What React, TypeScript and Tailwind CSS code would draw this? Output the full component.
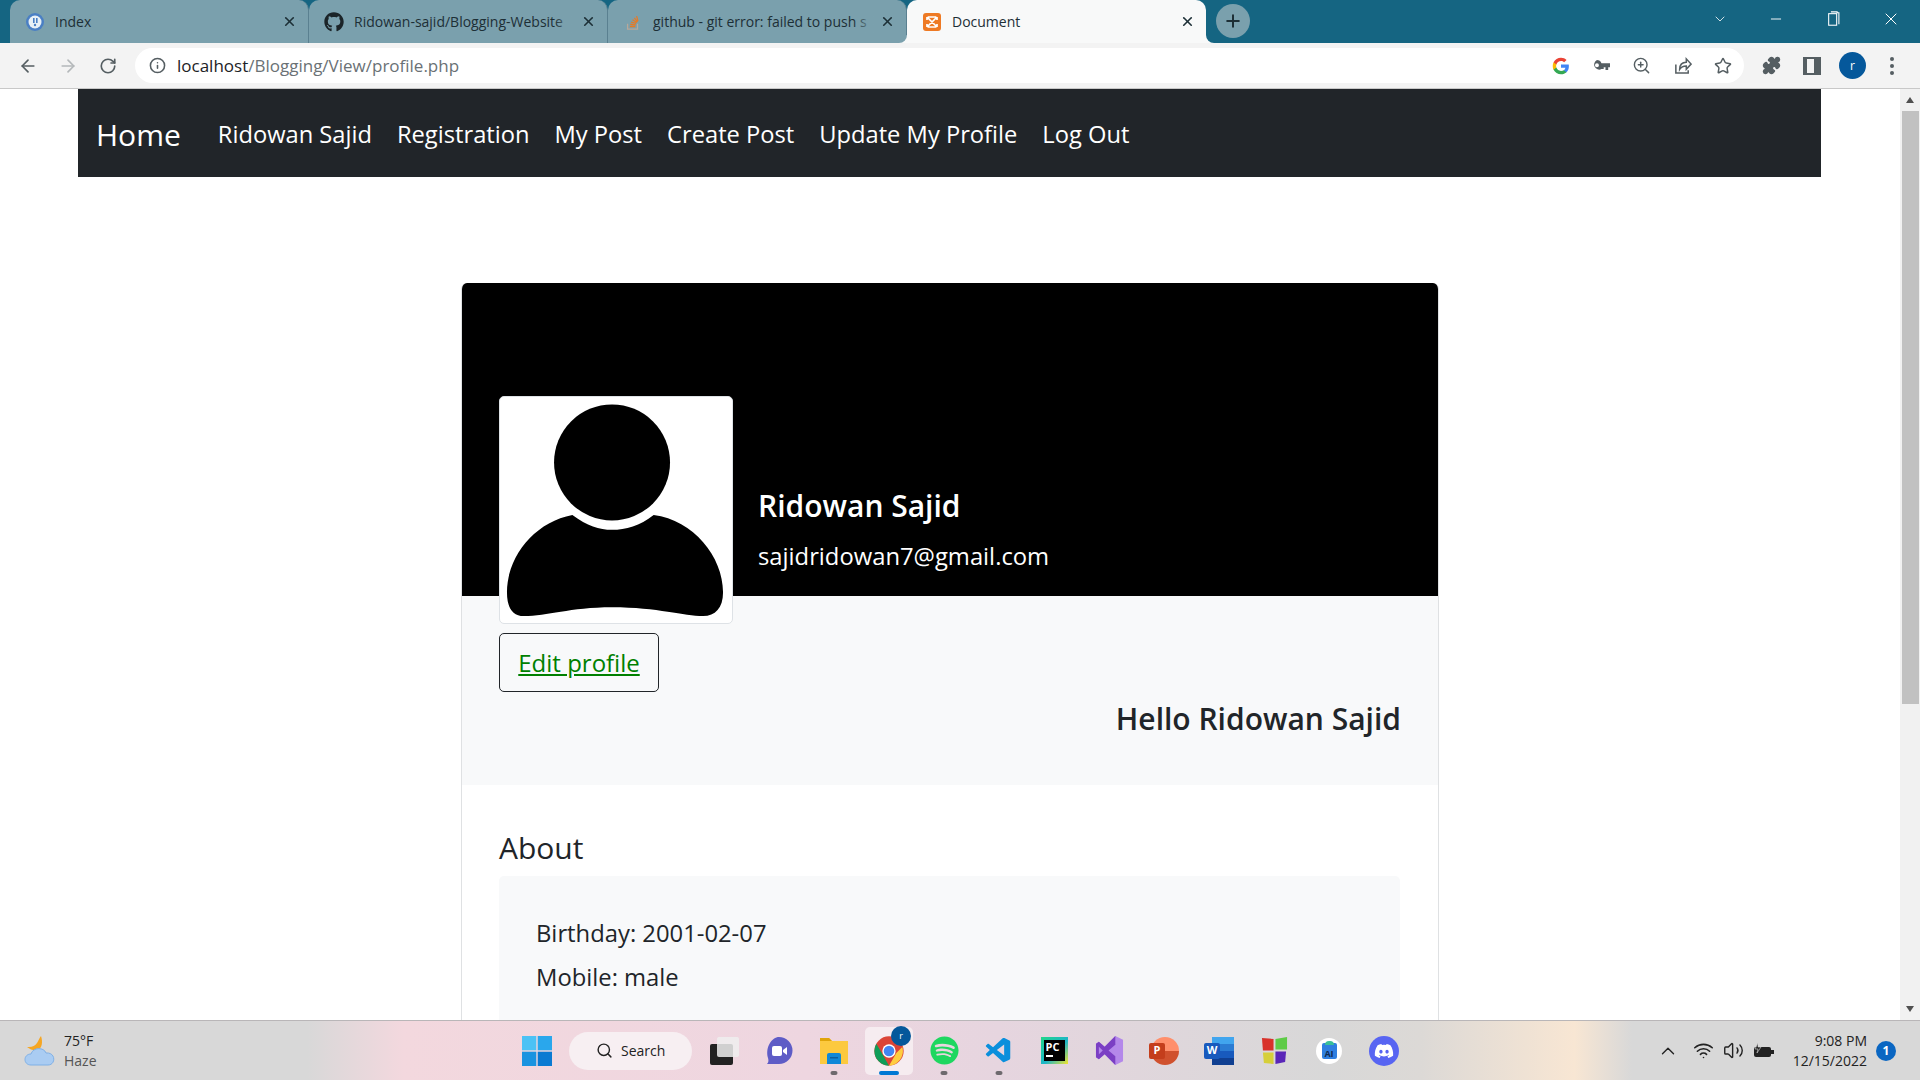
import React from "react";
import { ArrowLeft, ArrowRight, RotateCw, Info, ZoomIn, Star, Puzzle, X, Plus, ChevronDown, Minus, Search, ChevronUp, Wifi, Volume2 } from "lucide-react";
import { FaGithub, FaDiscord, FaSpotify } from "react-icons/fa";
import { VscVscode } from "react-icons/vsc";

const font = "font-['Open_Sans','Noto_Sans',sans-serif]";

function Tab({ icon, title, active, fade }: { icon: React.ReactNode; title: string; active?: boolean; fade?: boolean }) {
  return (
    <div className={`relative flex h-[43px] w-[299px] shrink-0 items-center pl-[15px] pr-[11px] rounded-t-[10px] ${active ? "z-10 bg-[#f8f9f9]" : "bg-[#7aa0ad] border-r border-[#5a8090]"}`}>
      {active && (
        <>
          <span className="absolute -left-[8px] bottom-0 h-[8px] w-[8px] bg-[#f8f9f9]"><span className="block h-full w-full rounded-br-[8px] bg-[#7aa0ad]" /></span>
          <span className="absolute -right-[8px] bottom-0 h-[8px] w-[8px] bg-[#f8f9f9]"><span className="block h-full w-full rounded-bl-[8px] bg-[#156582]" /></span>
        </>
      )}
      <span className="flex h-[20px] w-[20px] shrink-0 items-center justify-center">{icon}</span>
      <span className="ml-[10px] flex-1 overflow-hidden whitespace-nowrap pb-[1px] text-[14px] text-[#1d2f36]">{title}</span>
      {fade && <span className="absolute right-[31px] top-[10px] h-[24px] w-[22px] bg-gradient-to-r from-transparent to-[#7aa0ad]" />}
      <X className="ml-[8px] h-[15px] w-[15px] shrink-0 text-[#1d2f36]" strokeWidth={2.6} />
    </div>
  );
}

function TabBar() {
  return (
    <div className="flex h-[43px] shrink-0 items-start bg-[#156582] pl-[10px]">
      <Tab title="Index" icon={
        <svg viewBox="0 0 20 20" className="h-[20px] w-[20px]"><circle cx="10" cy="10" r="9" fill="#4a7fc4" /><circle cx="10" cy="10" r="6.5" fill="#e8f0f6" /><rect x="8" y="6" width="1.6" height="5" fill="#4a7fc4" /><rect x="11" y="6" width="1.6" height="5" fill="#4a7fc4" /><circle cx="10" cy="13" r="1.2" fill="#4a7fc4" /></svg>
      } />
      <Tab title="Ridowan-sajid/Blogging-Website" fade icon={<FaGithub className="h-[20px] w-[20px] text-[#1b2428]" />} />
      <Tab title="github - git error: failed to push s" fade icon={
        <svg viewBox="0 0 20 20" className="h-[18px] w-[18px]"><path d="M4 12v6h11v-6" fill="none" stroke="#b8a89a" strokeWidth="1.4" /><path d="M6.5 15h6M7 12.5l6 .6M7.7 10l5.8 1.6M9.4 7.5l5 3M11.5 5.3l3.6 4.6M14 3.5l1.5 5.5" stroke="#e87a24" strokeWidth="1.4" fill="none" /></svg>
      } />
      <Tab title="Document" active icon={
        <svg viewBox="0 0 20 20" className="h-[20px] w-[20px]"><rect x="1" y="1" width="18" height="18" rx="3" fill="#ee7a24" /><path d="M6 5h8M6 15h8M5 5l10 10M15 5L5 15M5 5v3M15 5v3M5 12v3M15 12v3" stroke="#fff" strokeWidth="1.7" fill="none" /></svg>
      } />
      <div className="ml-[10px] mt-[4px] flex h-[34px] w-[34px] items-center justify-center rounded-full bg-[#7aa0ad]">
        <Plus className="h-[20px] w-[20px] text-[#1d2f36]" strokeWidth={2.4} />
      </div>
      <div className="ml-auto flex h-[37px] items-center text-white">
        <ChevronDown className="mr-[40px] h-[16px] w-[16px]" strokeWidth={1.2} />
        <Minus className="mr-[43px] h-[16px] w-[16px]" strokeWidth={1.4} />
        <svg viewBox="0 0 14 18" className="mr-[40px] h-[16px] w-[14px]"><rect x="1" y="3" width="9" height="13" fill="none" stroke="#fff" strokeWidth="1.2" /><path d="M3.5 1h7v1h2v13" fill="none" stroke="#fff" strokeWidth="1.2" /></svg>
        <X className="mr-[19px] h-[20px] w-[20px]" strokeWidth={1.2} />
      </div>
    </div>
  );
}

function GoogleG() {
  return (
    <svg viewBox="0 0 24 24" className="h-[18px] w-[18px]">
      <path fill="#4285F4" d="M22.5 12.2c0-.8-.1-1.5-.2-2.2H12v4.2h5.9c-.3 1.4-1 2.5-2.2 3.300v2.800h3.600c2.100-1.900 3.200-4.800 3.200-8.100z" />
      <path fill="#34A853" d="M12 23c3 0 5.500-1 7.300-2.700l-3.600-2.800c-1 .7-2.200 1.100-3.700 1.100-2.900 0-5.300-1.900-6.200-4.500H2.100v2.900C3.900 20.500 7.700 23 12 23z" />
      <path fill="#FBBC05" d="M5.800 14.100c-.5-1.400-.5-2.800 0-4.200V7H2.100c-1.500 3-1.500 7 0 10l3.700-2.900z" />
      <path fill="#EA4335" d="M12 5.400c1.600 0 3.100.6 4.200 1.700l3.200-3.200C17.500 2.100 15 1 12 1 7.700 1 3.900 3.500 2.100 7l3.700 2.900c.9-2.600 3.300-4.500 6.200-4.500z" />
    </svg>
  );
}

function Toolbar() {
  return (
    <div className="flex h-[46px] shrink-0 items-center border-b border-[#c8c8c8] bg-[#f3f3f3] pl-[18px]">
      <ArrowLeft className="h-[20px] w-[20px] text-[#555e62]" strokeWidth={2} />
      <ArrowRight className="ml-[20px] h-[20px] w-[20px] text-[#b4b8ba]" strokeWidth={2} />
      <RotateCw className="ml-[21px] h-[18px] w-[18px] text-[#555e62]" strokeWidth={2.2} />
      <div className="ml-[18px] flex h-[35px] w-[1609px] shrink-0 items-center rounded-full bg-white pl-[14px] pr-[12px]">
        <Info className="h-[17px] w-[17px] text-[#555e62]" strokeWidth={2.2} />
        <span className="ml-[11px] whitespace-nowrap text-[17px] text-[#6a7175]"><span className="text-[#1c2226]">localhost</span>/Blogging/View/profile.php</span>
        <div className="ml-auto flex items-center gap-[22px] text-[#555e62]">
          <GoogleG />
          <svg viewBox="0 0 20 12" className="h-[11px] w-[18px]"><path d="M5.500 0a5.500 5.500 0 0 1 5 3.500H20V8h-2v3h-3V8h-2v2h-2.500A5.500 5.500 0 1 1 5.500 0zm0 3.500a2.200 2.200 0 1 0 0 4.400 2.200 2.200 0 0 0 0-4.400z" fill="#555e62" fillRule="evenodd" /></svg>
          <ZoomIn className="h-[19px] w-[19px]" strokeWidth={1.8} />
          <svg viewBox="0 0 20 20" className="h-[19px] w-[19px]" fill="none" stroke="#555e62" strokeWidth="1.6"><path d="M3 9v9h13v-3" /><path d="M7 14c0-5 3-7.500 7-7.500V3l5 5.500-5 5.500v-3.500c-3 0-5.500 1-7 3.500z" /></svg>
          <Star className="h-[18px] w-[18px]" strokeWidth={2} />
        </div>
      </div>
      <Puzzle className="ml-[18px] h-[19px] w-[19px] fill-[#555e62] text-[#555e62]" strokeWidth={2} />
      <div className="ml-[22px] flex h-[18px] w-[18px] justify-end border-[2px] border-[#555e62] bg-[#555e62]"><div className="mr-[5px] h-full w-[7px] bg-[#f3f3f3]" /></div>
      <div className="ml-[18px] flex h-[27px] w-[27px] items-center justify-center rounded-full bg-[#05589b] text-[12px] text-white">r</div>
      <div className="ml-[24px] flex flex-col gap-[3px]">
        <span className="h-[4px] w-[4px] rounded-full bg-[#555e62]" />
        <span className="h-[4px] w-[4px] rounded-full bg-[#555e62]" />
        <span className="h-[4px] w-[4px] rounded-full bg-[#555e62]" />
      </div>
    </div>
  );
}

function Navbar() {
  const links = ["Ridowan Sajid", "Registration", "My Post", "Create Post", "Update My Profile", "Log Out"];
  return (
    <nav className="ml-[78px] mr-[79px] flex h-[88px] items-center bg-[#212529] pt-[3px] pl-[18px] text-white">
      <span className="mr-[37px] text-[30px] leading-none">Home</span>
      <div className="flex gap-[25px] text-[23.7px] leading-none">
        {links.map((l) => <span key={l} className="whitespace-nowrap">{l}</span>)}
      </div>
    </nav>
  );
}

function Avatar() {
  return (
    <div className="relative z-10 flex h-[228px] w-[234px] shrink-0 items-center justify-center rounded-[5px] border border-[#dee2e6] bg-white">
      <svg viewBox="0 0 234 228" className="h-full w-full">
        <circle cx="113" cy="66" r="58.500" fill="#000" />
        <path d="M73 119 C88 130 100 134 113 134 C127 134 141 130 155 119 C195 124 225 161 225 197 C225 213 217 221 205 221 C185 221 160 212 113 212 C70 212 48 221 24 221 C13 221 7 213 7 197 C7 161 35 126 73 119 Z" fill="#000" />
      </svg>
    </div>
  );
}

function Profile() {
  return (
    <div className="mx-auto mt-[106px] w-[978px] overflow-hidden rounded-t-[6px] border-x border-[#dfe1e3] bg-white">
      <div className="flex h-[313px] items-end bg-black pl-[37px] text-white">
        <div className="-mb-[28px]"><Avatar /></div>
        <div className="ml-[25px] pb-[22px]">
          <div className="text-[30px] font-semibold leading-[36px]">Ridowan Sajid</div>
          <div className="mt-[14px] text-[23.8px] leading-[36px]">sajidridowan7@gmail.com</div>
        </div>
      </div>
      <div className="h-[189px] bg-[#f8f9fa] pl-[37px] pr-[37px] pt-[37px]">
        <div className="flex h-[59px] w-[160px] items-center justify-center rounded-[5px] border border-[#212529] text-[24px] text-[#008000] underline">Edit profile</div>
        <div className="mt-[2px] text-right text-[30px] font-semibold leading-[50px] text-[#212529]">Hello Ridowan Sajid</div>
      </div>
      <div className="pl-[37px] pr-[38px] pt-[41px]">
        <div className="text-[30px] leading-[44px] text-[#212529]">About</div>
        <div className="mt-[6px] h-[200px] rounded-t-[5px] bg-[#f8f9fa] pl-[37px] pt-[35px] text-[23.8px] leading-[44px] text-[#212529]">
          <div>Birthday: 2001-02-07</div>
          <div>Mobile: male</div>
        </div>
      </div>
    </div>
  );
}

function Scrollbar() {
  return (
    <div className="flex w-[20px] shrink-0 flex-col items-center bg-[#f1f1f1]">
      <div className="mt-[8px] h-0 w-0 border-x-[4px] border-b-[6px] border-x-transparent border-b-[#505050]" />
      <div className="mt-[8px] h-[593px] w-[17px] bg-[#c1c1c1]" />
      <div className="mt-auto mb-[8px] h-0 w-0 border-x-[4px] border-t-[6px] border-x-transparent border-t-[#505050]" />
    </div>
  );
}

function TaskIcon({ children, dot, active }: { children: React.ReactNode; dot?: boolean; active?: boolean }) {
  return (
    <div className={`relative ml-[7px] flex h-[48px] w-[48px] shrink-0 items-center justify-center rounded-[5px] ${active ? "bg-[#f6ecf0]" : ""}`}>
      {children}
      {dot && <span className="absolute bottom-0 left-1/2 h-[4px] w-[7px] -translate-x-1/2 rounded-full bg-[#6e6a6e]" />}
      {active && <span className="absolute bottom-0 left-1/2 h-[4px] w-[20px] -translate-x-1/2 rounded-full bg-[#0078d4]" />}
    </div>
  );
}

function Taskbar() {
  return (
    <div className="flex h-[60px] shrink-0 items-center border-t border-[#b9b6b8] bg-[linear-gradient(90deg,#d8d8d8_0%,#d8d8d8_16%,#f3d8de_21%,#eed6e0_42%,#e6d5df_52%,#d8d8d8_69%,#dcd9d6_74%,#f8e6d3_82%,#d8d8d8_85%,#d8d8d8_100%)]">
      <div className="flex w-[522px] shrink-0 items-center pl-[24px]">
        <svg viewBox="0 0 32 30" className="h-[30px] w-[32px]">
          <path d="M17 0c2 6 1 12-3 14-4 1-8-.5-11-3 5 .5 8-1 10-4 1.500-2.500 2.500-5 4-7z" fill="#f5a623" />
          <path d="M7 29c-8 0-8-11 0-11 2-7 13-7 15-1 10-1 10 12 2 12z" fill="#aaccf2" stroke="#7fb0e6" />
        </svg>
        <div className="ml-[8px] text-[14px] leading-[20px]">
          <div className="text-[#222]">75°F</div>
          <div className="text-[#555]">Haze</div>
        </div>
      </div>
      <svg viewBox="0 0 30 30" className="h-[30px] w-[30px] shrink-0">
        <rect x="0" y="0" width="14.300" height="14.300" fill="#4cc2f5" />
        <rect x="15.700" y="0" width="14.300" height="14.300" fill="#2aa7ec" />
        <rect x="0" y="15.700" width="14.300" height="14.300" fill="#1a93e0" />
        <rect x="15.700" y="15.700" width="14.300" height="14.300" fill="#0a7ad2" />
      </svg>
      <div className="ml-[17px] mr-[1px] flex h-[38px] w-[123px] shrink-0 items-center rounded-full bg-[#f7eff2] pl-[27px] text-[#222]">
        <Search className="h-[17px] w-[17px]" strokeWidth={2} />
        <span className="ml-[8px] text-[14px]">Search</span>
      </div>
      <TaskIcon>
        <div className="absolute left-[10px] top-[17px] h-[21px] w-[23px] rounded-[2px] bg-[#222]" />
        <div className="absolute left-[17px] top-[10px] h-[20px] w-[22px] rounded-[2px] bg-[#eeeeee]/85" />
      </TaskIcon>
      <TaskIcon>
        <svg viewBox="0 0 30 30" className="h-[30px] w-[30px]"><path d="M15 1a13.500 13.500 0 0 1 0 27H3c2-2 1.500-4 1-6-3-11 4-21 11-21z" fill="#5e5cc6" /><rect x="8" y="10" width="10" height="10" rx="2" fill="#fff" /><path d="M19 14l4-3v8l-4-3z" fill="#fff" /></svg>
      </TaskIcon>
      <TaskIcon dot>
        <svg viewBox="0 0 30 28" className="h-[28px] w-[30px]"><path d="M1 1h9l3 3h16v23H1z" fill="#fcc93f" /><path d="M1 1h9l3 3H1z" fill="#e0a409" /><path d="M8 18q0-2 2-2h10q2 0 2 2v9H8z" fill="#0f88d8" /><rect x="11" y="20" width="8" height="1.500" fill="#0b5fa0" /></svg>
      </TaskIcon>
      <TaskIcon active>
        <div className="relative h-[32px] w-[32px]">
          <svg viewBox="0 0 48 48" className="h-[32px] w-[32px]"><circle cx="24" cy="24" r="22" fill="#db4437" /><path d="M24 46a22 22 0 0 1-19-33l11 19z" fill="#0f9d58" /><path d="M24 46l11-19 9-9a22 22 0 0 1-20 28z" fill="#ffcd40" /><circle cx="24" cy="24" r="10" fill="#fff" /><circle cx="24" cy="24" r="8" fill="#4285f4" /></svg>
          <div className="absolute -right-[6px] -top-[9px] flex h-[20px] w-[20px] items-center justify-center rounded-full bg-[#05589b] text-[9px] text-white">r</div>
        </div>
      </TaskIcon>
      <TaskIcon dot><FaSpotify className="h-[29px] w-[29px] text-[#1ed760]" /></TaskIcon>
      <TaskIcon dot><VscVscode className="h-[30px] w-[30px] text-[#0a8fdc]" /></TaskIcon>
      <TaskIcon>
        <div className="flex h-[27px] w-[27px] items-center justify-center bg-[linear-gradient(135deg,#21d789,#1cb5c9_55%,#f5e52d)]">
          <div className="flex h-[21px] w-[21px] flex-col bg-black px-[2px] pt-[1px] text-[11px] font-bold leading-[12px] text-white">PC<span className="mt-[2px] h-[2px] w-[7px] bg-white" /></div>
        </div>
      </TaskIcon>
      <TaskIcon>
        <svg viewBox="0 0 30 32" className="h-[31px] w-[29px]"><path d="M21 1l8 4v22l-8 4-11-11-6 5-3-2V9l3-2 6 5z" fill="#b488ea" /><path d="M21 1L10 12l-6-5-3 2v14l3 2 6-5 11 11zM4 12l4 4-4 4zM21 10v12l-7-6z" fill="#7b3fc4" fillRule="evenodd" /></svg>
      </TaskIcon>
      <TaskIcon>
        <div className="relative h-[28px] w-[30px]">
          <div className="absolute right-0 top-0 h-[28px] w-[28px] rounded-full bg-[linear-gradient(180deg,#ff8f6b_50%,#d0512e_50%)]" />
          <div className="absolute left-0 top-[6px] flex h-[16px] w-[16px] items-center justify-center rounded-[2px] bg-[#c43e1c] text-[11px] font-bold text-white">P</div>
        </div>
      </TaskIcon>
      <TaskIcon>
        <div className="relative h-[28px] w-[30px]">
          <div className="absolute right-0 top-0 flex h-[28px] w-[22px] flex-col">
            <span className="h-[7px] bg-[#41a5ee]" /><span className="h-[7px] bg-[#2b7cd3]" /><span className="h-[7px] bg-[#185abd]" /><span className="h-[7px] bg-[#103f91]" />
          </div>
          <div className="absolute left-0 top-[6px] flex h-[16px] w-[16px] items-center justify-center rounded-[2px] bg-[#185abd] text-[11px] font-bold text-white">W</div>
        </div>
      </TaskIcon>
      <TaskIcon>
        <svg viewBox="0 0 28 30" className="h-[29px] w-[27px]"><path d="M1 2l12 1v12H2z" fill="#d8312a" /><path d="M15 3l12-2v13H15z" fill="#5ecb47" /><path d="M2 17h11v12l-10-1z" fill="#d6cf3a" /><path d="M15 16h11l-1 11-10 2z" fill="#5a26b8" /></svg>
      </TaskIcon>
      <TaskIcon>
        <div className="flex h-[26px] w-[26px] items-center justify-center rounded-full bg-white">
          <div className="relative flex h-[16px] w-[15px] items-end justify-center rounded-[2px] bg-[#2f7fe0] text-[9px] font-bold leading-[11px] text-[#102a50]">AI<span className="absolute -top-[2px] left-[3px] h-[4px] w-[9px] rounded-t bg-[#3bbf9a]" /></div>
        </div>
      </TaskIcon>
      <TaskIcon>
        <div className="flex h-[30px] w-[30px] items-center justify-center rounded-full bg-[#5865f2]"><FaDiscord className="h-[20px] w-[20px] text-white" /></div>
      </TaskIcon>
      <div className="ml-auto flex items-center pr-[24px] text-[#222]">
        <ChevronUp className="h-[22px] w-[22px]" strokeWidth={1.5} />
        <Wifi className="ml-[14px] h-[21px] w-[21px]" strokeWidth={1.8} />
        <Volume2 className="ml-[9px] h-[21px] w-[21px]" strokeWidth={1.6} />
        <svg viewBox="0 0 22 16" className="ml-[9px] h-[16px] w-[22px]"><rect x="1" y="4" width="17" height="10" rx="2" fill="#222" /><rect x="18" y="7" width="3" height="4" fill="#222" /><path d="M5 0L2 6h3l-1 4 4-6H5z" fill="#222" stroke="#d8d8d8" strokeWidth=".6" /></svg>
        <div className="ml-[18px] text-right text-[14px] leading-[20px]">
          <div>9:08 PM</div>
          <div>12/15/2022</div>
        </div>
        <div className="ml-[9px] flex h-[20px] w-[20px] items-center justify-center rounded-full bg-[#0a66c2] text-[12px] font-bold text-white">1</div>
      </div>
    </div>
  );
}

export default function App() {
  return (
    <div className={`flex h-screen w-full flex-col overflow-hidden bg-white ${font}`}>
      <TabBar />
      <Toolbar />
      <div className="flex min-h-0 flex-1">
        <div className="min-w-0 flex-1 overflow-hidden">
          <Navbar />
          <Profile />
        </div>
        <Scrollbar />
      </div>
      <Taskbar />
    </div>
  );
}
